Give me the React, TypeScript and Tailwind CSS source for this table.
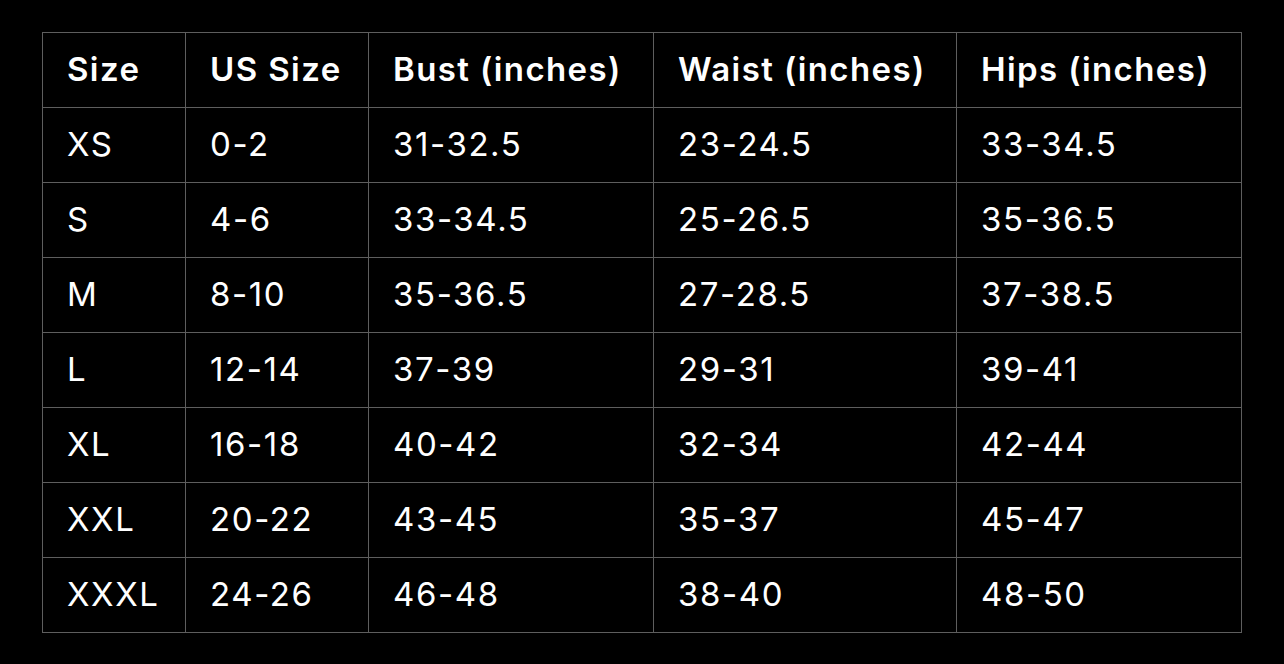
const headers = ["Size", "US Size", "Bust (inches)", "Waist (inches)", "Hips (inches)"];

const rows = [
  ["XS", "0-2", "31-32.5", "23-24.5", "33-34.5"],
  ["S", "4-6", "33-34.5", "25-26.5", "35-36.5"],
  ["M", "8-10", "35-36.5", "27-28.5", "37-38.5"],
  ["L", "12-14", "37-39", "29-31", "39-41"],
  ["XL", "16-18", "40-42", "32-34", "42-44"],
  ["XXL", "20-22", "43-45", "35-37", "45-47"],
  ["XXXL", "24-26", "46-48", "38-40", "48-50"],
];

const widths = ["w-[143px]", "w-[183px]", "w-[285px]", "w-[303px]", "w-[285px]"];

export default function App() {
  return (
    <div
      className="flex min-h-screen items-center justify-center bg-black text-white"
      style={{ fontFamily: "Inter, 'Liberation Sans', sans-serif" }}
    >
      <table className="table-fixed border-collapse border border-[#5e5e5e]">
        <colgroup>
          {widths.map((w, i) => (
            <col key={i} className={w} />
          ))}
        </colgroup>
        <thead>
          <tr className="h-[75px]">
            {headers.map((h) => (
              <th
                key={h}
                className="border border-[#5e5e5e] pl-6 text-left text-[33px] font-semibold tracking-[1.4px] whitespace-nowrap"
              >
                {h}
              </th>
            ))}
          </tr>
        </thead>
        <tbody>
          {rows.map((r) => (
            <tr key={r[0]} className="h-[75px]">
              {r.map((c, i) => (
                <td
                  key={i}
                  className="border border-[#5e5e5e] pl-6 text-left text-[33px] font-normal tracking-[1.6px] whitespace-nowrap"
                >
                  {c}
                </td>
              ))}
            </tr>
          ))}
        </tbody>
      </table>
    </div>
  );
}
